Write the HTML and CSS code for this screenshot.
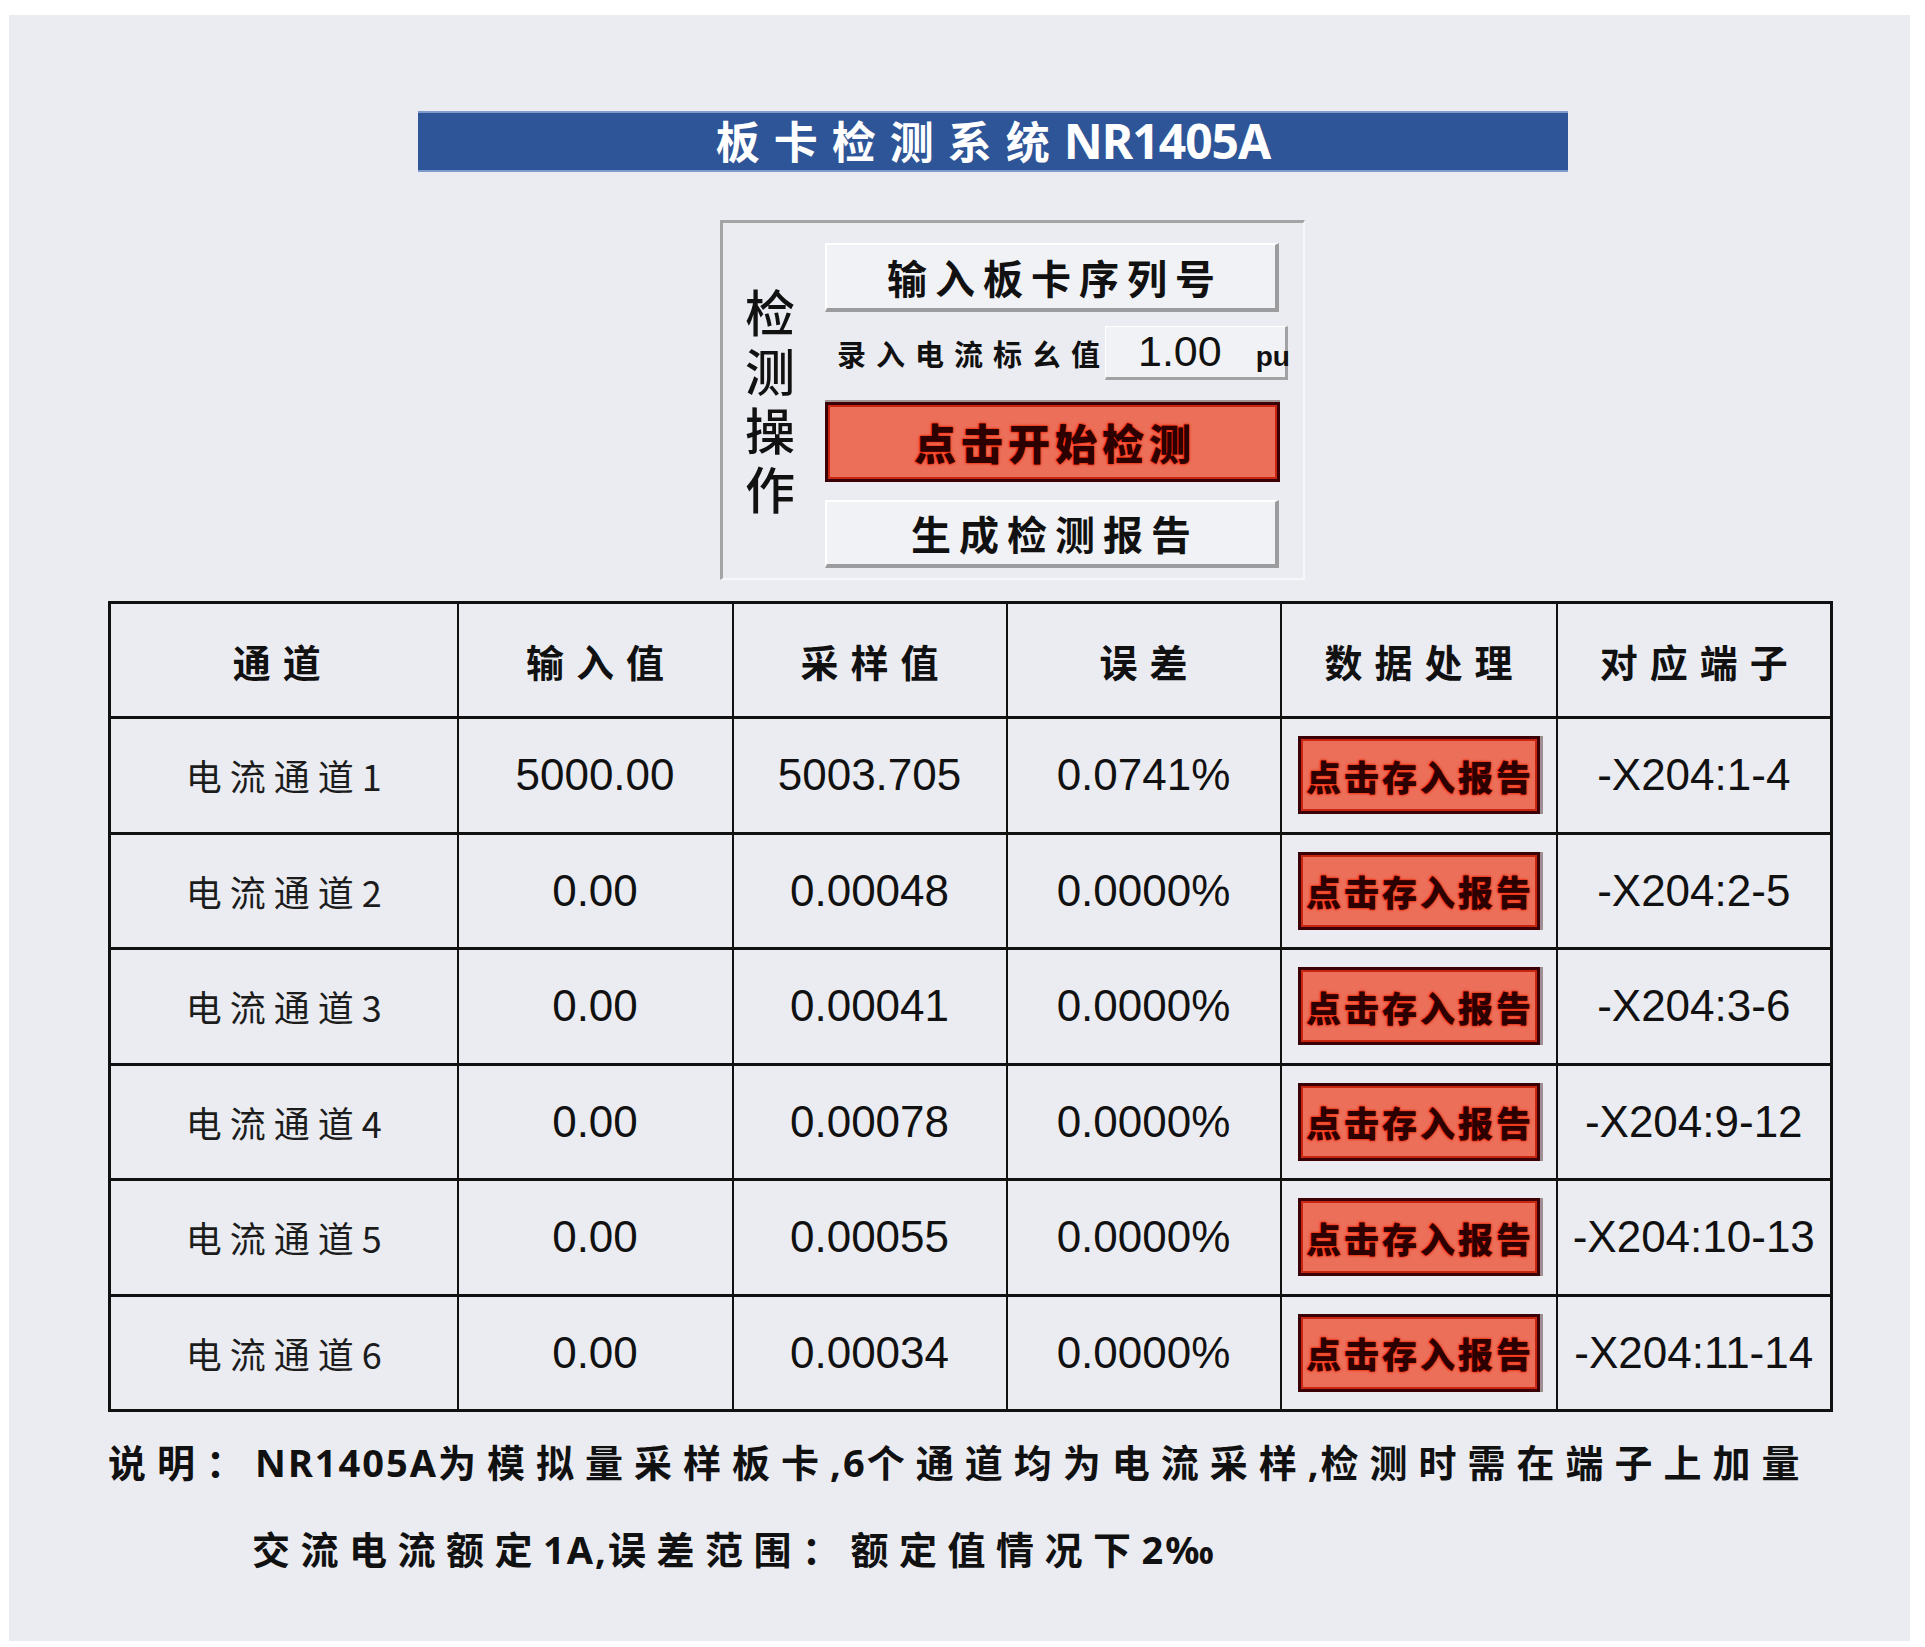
FILE: index.html
```html
<!DOCTYPE html>
<html lang="zh-CN">
<head>
<meta charset="utf-8">
<title>板卡检测系统 NR1405A</title>
<link rel="stylesheet" href="styles.css">
</head>
<body>
<div class="panel">
  <div class="title"><span class="title-cjk">板卡检测系统</span><span class="title-lat">NR1405A</span></div>

  <div class="ops">
    <div class="vlabel">检测操作</div>
    <div class="stack">
      <div class="btn btn-serial"><span class="btn-text">输入板卡序列号</span></div>
      <div class="field-row">
        <span class="field-label">录入电流标幺值</span>
        <div class="field"><span class="val">1.00</span><span class="unit">pu</span></div>
      </div>
      <div class="btn-red btn-start"><span class="red-text">点击开始检测</span></div>
      <div class="btn btn-report"><span class="btn-text">生成检测报告</span></div>
    </div>
  </div>

  <table class="grid">
    <colgroup>
      <col class="c1"><col class="c2"><col class="c3"><col class="c4"><col class="c5"><col class="c6">
    </colgroup>
    <thead>
      <tr>
        <th class="first"><span class="hd">通道</span></th>
        <th><span class="hd">输入值</span></th>
        <th><span class="hd">采样值</span></th>
        <th><span class="hd">误差</span></th>
        <th><span class="hd">数据处理</span></th>
        <th><span class="hd">对应端子</span></th>
      </tr>
    </thead>
    <tbody>
      <tr>
        <td class="ch">电流通道1</td><td class="num">5000.00</td><td class="num">5003.705</td><td class="num">0.0741%</td>
        <td><div class="save"><span>点击存入报告</span></div></td><td class="num">-X204:1-4</td>
      </tr>
      <tr>
        <td class="ch">电流通道2</td><td class="num">0.00</td><td class="num">0.00048</td><td class="num">0.0000%</td>
        <td><div class="save"><span>点击存入报告</span></div></td><td class="num">-X204:2-5</td>
      </tr>
      <tr>
        <td class="ch">电流通道3</td><td class="num">0.00</td><td class="num">0.00041</td><td class="num">0.0000%</td>
        <td><div class="save"><span>点击存入报告</span></div></td><td class="num">-X204:3-6</td>
      </tr>
      <tr>
        <td class="ch">电流通道4</td><td class="num">0.00</td><td class="num">0.00078</td><td class="num">0.0000%</td>
        <td><div class="save"><span>点击存入报告</span></div></td><td class="num">-X204:9-12</td>
      </tr>
      <tr>
        <td class="ch">电流通道5</td><td class="num">0.00</td><td class="num">0.00055</td><td class="num">0.0000%</td>
        <td><div class="save"><span>点击存入报告</span></div></td><td class="num">-X204:10-13</td>
      </tr>
      <tr>
        <td class="ch">电流通道6</td><td class="num">0.00</td><td class="num">0.00034</td><td class="num">0.0000%</td>
        <td><div class="save"><span>点击存入报告</span></div></td><td class="num">-X204:11-14</td>
      </tr>
    </tbody>
  </table>

  <div class="note">
    <div class="note-line">说明：<span class="lat">NR1405A</span>为模拟量采样板卡<span class="lat">,6</span>个通道均为电流采样<span class="lat">,</span>检测时需在端子上加量</div>
    <div class="note-line note-indent">交流电流额定<span class="lat">1A,</span>误差范围：额定值情况下<span class="lat">2‰</span></div>
  </div>
</div>
</body>
</html>
```

FILE: styles.css
```css
html, body {
  margin: 0;
  padding: 0;
  background: #ffffff;
}

body {
  font-family: "Noto Sans CJK SC", "Noto Sans", sans-serif;
  color: #111;
}

.panel {
  box-sizing: border-box;
  margin: 15px 0 0 9px;
  width: 1901px;
  height: 1626px;
  background: #ebecf2;
  padding-top: 96px;
  overflow: hidden;
}

/* ---------- title bar ---------- */
.title {
  box-sizing: border-box;
  margin-left: 409px;
  width: 1150px;
  height: 61px;
  background: #2e5597;
  border-top: 2px solid #7f9acb;
  border-bottom: 2px solid #7f9acb;
  color: #ffffff;
  text-align: center;
  line-height: 54px;
  white-space: nowrap;
}

.title-cjk {
  font-family: "Noto Sans CJK SC", sans-serif;
  font-weight: 700;
  font-size: 44px;
  letter-spacing: 14px;
}

.title-lat {
  font-family: "Noto Sans", "Noto Sans CJK SC", sans-serif;
  font-weight: 700;
  font-size: 48px;
  letter-spacing: -1px;
}

/* ---------- operation box ---------- */
.ops {
  box-sizing: border-box;
  display: flex;
  margin: 48px 0 0 711px;
  width: 585px;
  height: 360px;
  border-top: 3px solid #a4a4a6;
  border-left: 3px solid #a4a4a6;
  border-right: 2px solid #f7f7f9;
  border-bottom: 2px solid #f7f7f9;
  padding: 20px 0 0 22px;
}

.vlabel {
  align-self: center;
  width: 50px;
  margin: 0 30px 0 0;
  font-size: 50px;
  line-height: 59px;
  font-weight: 500;
  color: #111;
  position: relative;
  top: -12px;
}

.stack {
  display: flex;
  flex-direction: column;
  width: 463px;
}

.btn {
  box-sizing: border-box;
  width: 454px;
  display: flex;
  align-items: center;
  justify-content: center;
  background: #f1f2f5;
  border-top: 2px solid #ffffff;
  border-left: 2px solid #ffffff;
  border-right: 4px solid #9c9c9e;
  border-bottom: 4px solid #9c9c9e;
}

.btn-text {
  font-size: 40px;
  font-weight: 700;
  letter-spacing: 8px;
  padding-left: 8px;
  color: #111;
  line-height: 1;
}

.btn-serial {
  height: 69px;
  margin-bottom: 14px;
}

.btn-report {
  height: 68px;
}

.field-row {
  display: flex;
  align-items: center;
  height: 54px;
  margin-bottom: 22px;
}

.field-label {
  box-sizing: border-box;
  width: 280px;
  padding-left: 12px;
  font-size: 29px;
  font-weight: 700;
  letter-spacing: 10px;
  color: #111;
  white-space: nowrap;
}

.field {
  box-sizing: border-box;
  display: flex;
  align-items: baseline;
  width: 183px;
  height: 54px;
  background: #f1f2f5;
  border-top: 1px solid #ffffff;
  border-left: 1px solid #ffffff;
  border-right: 3px solid #a2a2a4;
  border-bottom: 3px solid #a2a2a4;
  padding-left: 32px;
  line-height: 48px;
}

.val {
  font-family: "Liberation Sans", sans-serif;
  font-size: 43px;
  color: #111;
}

.unit {
  font-family: "Liberation Sans", sans-serif;
  font-size: 28px;
  font-weight: 700;
  margin-left: 34px;
  color: #111;
}

.btn-red {
  box-sizing: border-box;
  display: flex;
  align-items: center;
  justify-content: center;
  background: #ec6f59;
  border: 3px solid #3a0006;
  box-shadow: inset 0 0 0 2px #c92611, 0 -2px 0 #a29494;
}

.btn-start {
  width: 455px;
  height: 80px;
  margin-bottom: 18px;
}

.red-text {
  font-size: 42px;
  font-weight: 900;
  letter-spacing: 5px;
  padding-left: 5px;
  color: #2c0000;
  line-height: 1;
  text-shadow: 0 0 1px #ff1a00, 0 0 2px #ff2a00, 0 0 3px #e32200;
}

/* ---------- table ---------- */
.grid {
  margin: 21px 0 0 99px;
  border-collapse: collapse;
  table-layout: fixed;
  width: 1722px;
  border: 3px solid #111;
}

.c1 { width: 348px; }
.c2 { width: 275px; }
.c3 { width: 274px; }
.c4 { width: 274px; }
.c5 { width: 276px; }
.c6 { width: 275px; }

.grid th,
.grid td {
  border-left: 2px solid #111;
  border-right: 2px solid #111;
  border-top: 3px solid #111;
  border-bottom: 3px solid #111;
  text-align: center;
  vertical-align: middle;
  padding: 0;
  white-space: nowrap;
}

.grid thead tr {
  height: 115px;
}

.grid tbody tr {
  height: 115.5px;
}

.grid th.first {
  padding-right: 14px;
}

.hd {
  font-size: 38px;
  font-weight: 700;
  letter-spacing: 12px;
  padding-left: 12px;
  color: #111;
}

.ch {
  font-size: 36px;
  font-weight: 400;
  letter-spacing: 8px;
  padding-left: 8px !important;
  color: #1c1c1c;
}

.num {
  font-family: "Liberation Sans", sans-serif;
  font-size: 44px;
  color: #111;
}

.save {
  box-sizing: border-box;
  margin: 0 auto;
  width: 242px;
  height: 78px;
  display: flex;
  align-items: center;
  justify-content: center;
  background: #ec6f59;
  border: 3px solid #3a0006;
  box-shadow: inset 0 0 0 2px #c92611, 3px 0 0 #9d8f93;
}

.save span {
  font-size: 35px;
  font-weight: 900;
  letter-spacing: 3px;
  padding-left: 3px;
  color: #2c0000;
  line-height: 1;
  text-shadow: 0 0 1px #ff1a00, 0 0 2px #ff2a00, 0 0 3px #e32200;
}

/* ---------- note ---------- */
.note {
  margin: 6px 0 0 99px;
}

.note-line {
  font-size: 38px;
  font-weight: 700;
  line-height: 85px;
  letter-spacing: 11px;
  color: #111;
  white-space: nowrap;
}

.note-indent {
  padding-left: 144px;
  letter-spacing: 10.5px;
}

.lat {
  font-family: "Noto Sans", sans-serif;
  letter-spacing: 2px;
}
```
